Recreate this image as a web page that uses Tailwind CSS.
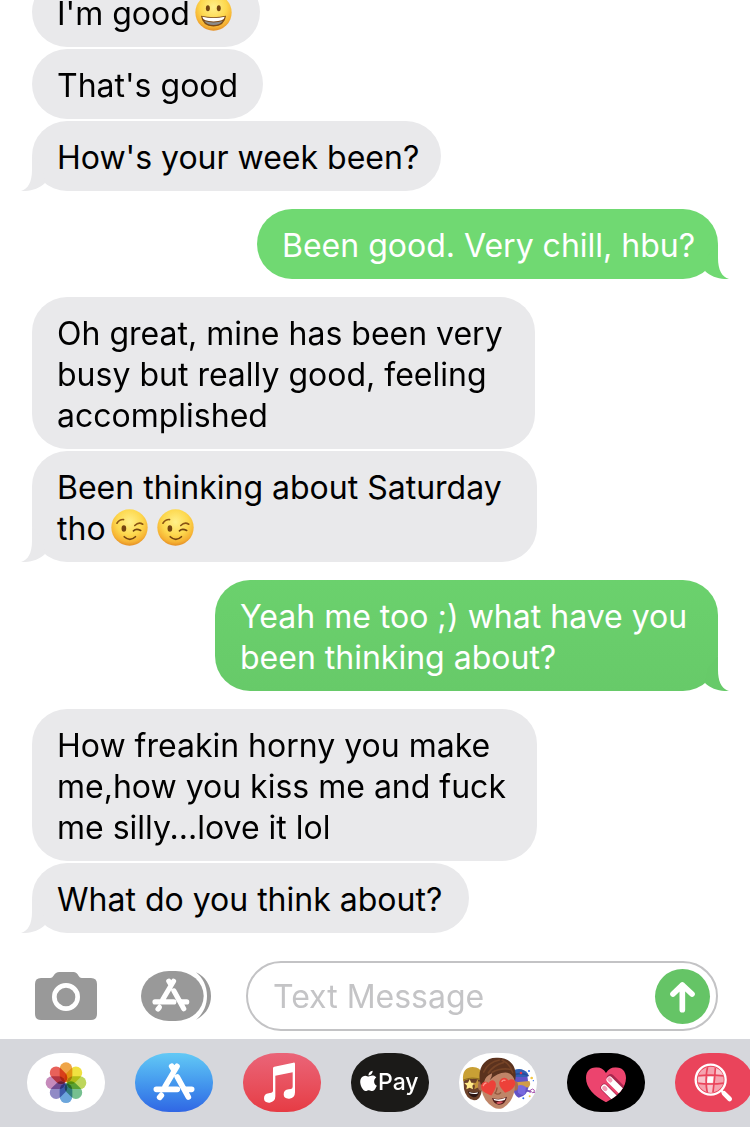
<!DOCTYPE html>
<html lang="en">
<head>
<meta charset="utf-8">
<meta name="viewport" content="width=device-width, initial-scale=1">
<title>Messages</title>
<script src="https://cdn.jsdelivr.net/npm/@tailwindcss/browser@4"></script>
</head>
<body class="bg-white font-[Inter,'Liberation_Sans',sans-serif]">
<svg class="absolute size-0" aria-hidden="true">
  <defs>
    <radialGradient id="face" cx="50%" cy="35%" r="65%">
      <stop offset="0" stop-color="#fff08a"/><stop offset=".55" stop-color="#fdd84e"/><stop offset=".85" stop-color="#f6b334"/><stop offset="1" stop-color="#e58f25"/>
    </radialGradient>
  </defs>
  <symbol id="tail" viewBox="0 0 24 35"><path d="M11 0V14C11 26 7 33 0 35C9 35.5 18 33 24 27L21 12Z" fill="currentColor"/></symbol>
  <symbol id="wink" viewBox="0 0 112 112">
    <circle cx="56" cy="56" r="55" fill="url(#face)"/>
    <path d="M18 43Q26 31 38 32M72 50Q84 38 96 46" fill="none" stroke="#8a5414" stroke-width="5" stroke-linecap="round"/>
    <ellipse cx="39" cy="59" rx="7" ry="10" fill="#744510"/>
    <path d="M68 66Q76 58 90 65" fill="none" stroke="#744510" stroke-width="5" stroke-linecap="round"/>
    <path d="M40 84Q57 100 74 84" fill="none" stroke="#744510" stroke-width="5" stroke-linecap="round"/>
  </symbol>
  <symbol id="grin" viewBox="0 0 112 112">
    <circle cx="56" cy="56" r="55" fill="url(#face)"/>
    <ellipse cx="39" cy="43" rx="6" ry="9" fill="#744510"/><ellipse cx="72" cy="43" rx="6" ry="9" fill="#744510"/>
    <path d="M18 66Q56 75 94 66Q90 98 56 98Q22 98 18 66Z" fill="#7d4a16"/>
    <path d="M22 69Q56 77 90 69Q88 83 56 83Q24 83 22 69Z" fill="#fff"/>
    <path d="M28 82Q56 90 84 82Q76 94 56 94Q36 94 28 82Z" fill="#8b8b8b"/>
  </symbol>
  <symbol id="astore" viewBox="458 336 130 120">
    <path d="M531 350L495 411M515 350L520 358M532 382L565 442M469 419H532M558 419H575M484 437L479 443" fill="none" stroke="#fff" stroke-width="17" stroke-linecap="round"/>
  </symbol>
</svg>

<div class="flex min-h-screen flex-col overflow-hidden">
  <main class="flex flex-col items-start gap-[2px] px-8 text-[32px] leading-[41px] whitespace-nowrap text-black">
    <p class="-mt-[23px] w-[228px] rounded-[35px] bg-[#e9e9eb] px-[25px] pt-4 pb-[13px]">I'm good<svg role="img" aria-label="grinning face" class="ml-[5px] inline size-[37px] align-[-6px]"><use href="#grin"/></svg></p>
    <p class="w-[231px] rounded-[35px] bg-[#e9e9eb] px-[25px] pt-4 pb-[13px]">That's good</p>
    <p class="relative w-[409px] rounded-[35px] bg-[#e9e9eb] px-[25px] pt-4 pb-[13px]">How's your week been?<svg aria-hidden="true" class="absolute bottom-0 -left-[11px] h-[35px] w-6 text-[#e9e9eb]"><use href="#tail"/></svg></p>

    <p class="relative my-4 w-[461px] self-end rounded-[35px] bg-[#70d972] px-[25px] pt-4 pb-[13px] text-white">Been good. Very chill, hbu?<svg aria-hidden="true" class="absolute -right-[11px] bottom-0 h-[35px] w-6 -scale-x-100 text-[#70d972]"><use href="#tail"/></svg></p>

    <p class="w-[503px] rounded-[35px] bg-[#e9e9eb] px-[25px] pt-4 pb-[13px]">Oh great, mine has been very<br>busy but really good, feeling<br>accomplished</p>
    <p class="relative w-[505px] rounded-[35px] bg-[#e9e9eb] px-[25px] pt-4 pb-[13px]">Been thinking about Saturday<br>tho<svg role="img" aria-label="winking face" class="ml-[5px] inline size-[37px] align-[-6px]"><use href="#wink"/></svg><svg role="img" aria-label="winking face" class="ml-[9px] inline size-[37px] align-[-6px]"><use href="#wink"/></svg><svg aria-hidden="true" class="absolute bottom-0 -left-[11px] h-[35px] w-6 text-[#e9e9eb]"><use href="#tail"/></svg></p>

    <p class="relative my-4 w-[503px] self-end rounded-[35px] bg-linear-to-b from-[#6bd16d] to-[#67ca69] px-[25px] pt-4 pb-[13px] text-white">Yeah me too ;) what have you<br>been thinking about?<svg aria-hidden="true" class="absolute -right-[11px] bottom-0 h-[35px] w-6 -scale-x-100 text-[#67ca69]"><use href="#tail"/></svg></p>

    <p class="w-[505px] rounded-[35px] bg-[#e9e9eb] px-[25px] pt-4 pb-[13px]">How freakin horny you make<br>me,how you kiss me and fuck<br>me silly...love it lol</p>
    <p class="relative w-[437px] rounded-[35px] bg-[#e9e9eb] px-[25px] pt-4 pb-[13px]">What do you think about?<svg aria-hidden="true" class="absolute bottom-0 -left-[11px] h-[35px] w-6 text-[#e9e9eb]"><use href="#tail"/></svg></p>
  </main>

  <form class="mt-7 mb-2 flex items-center pr-8 pl-[35px]">
    <button type="button" aria-label="Camera" class="shrink-0">
      <svg class="h-12 w-[62px]" viewBox="105 66 186 144"><path d="M123 84H151Q157 84 160 78Q167 66 178 66H220Q230 66 236 78Q239 84 245 84H273Q291 84 291 102V192Q291 210 273 210H123Q105 210 105 192V102Q105 84 123 84Z" fill="#999"/><circle cx="198" cy="141" r="35" fill="none" stroke="#fff" stroke-width="14"/></svg>
    </button>
    <button type="button" aria-label="Apps" class="ml-11 shrink-0">
      <svg class="h-[50px] w-[70px]" viewBox="423 63 210 150"><rect x="423" y="63" width="188" height="150" rx="84" ry="75" fill="#999"/><path d="M588 67C616 80 633 106 633 138S616 195 588 209C608 193 621 168 621 138S608 83 588 67Z" fill="#999"/><use href="#astore" x="454" y="81" width="119" height="108"/></svg>
    </button>
    <div class="ml-[35px] flex h-[70px] min-w-0 flex-1 items-center rounded-full border-2 border-[#c3c3c5] pr-[6px] pl-[25px]">
      <input type="text" aria-label="Text Message" placeholder="Text Message" class="min-w-0 flex-1 bg-transparent text-[32px] leading-[41px] outline-none placeholder:text-[#c4c4c6]">
      <button type="submit" aria-label="Send" class="size-[55px] shrink-0 rounded-full bg-[#65c466]">
        <svg class="size-[55px]" viewBox="315 54 165 165" fill="none" stroke="#fff" stroke-width="17" stroke-linecap="round" stroke-linejoin="round"><path d="M397 176V102M369 129L397 102L426 129"/></svg>
      </button>
    </div>
  </form>

  <nav aria-label="Apps" class="flex flex-1 items-start gap-[30px] overflow-hidden bg-[#d6d7dc] pt-[14px] pb-[15px] pl-[27px]">
    <button aria-label="Photos" class="h-[59px] w-[78px] shrink-0 overflow-hidden rounded-[34px/29px] bg-white">
      <svg class="h-[59px] w-[78px]" viewBox="81 310 234 177">
        <g transform="translate(198 399)" class="isolate *:mix-blend-multiply">
          <rect x="-19" y="-61" width="38" height="59" rx="19" fill="#efa548"/>
          <rect x="-19" y="-61" width="38" height="59" rx="19" fill="#f0e140" transform="rotate(45)"/>
          <rect x="-19" y="-61" width="38" height="59" rx="19" fill="#bdd65c" transform="rotate(90)"/>
          <rect x="-19" y="-61" width="38" height="59" rx="19" fill="#76c090" transform="rotate(135)"/>
          <rect x="-19" y="-61" width="38" height="59" rx="19" fill="#6ca6dc" transform="rotate(180)"/>
          <rect x="-19" y="-61" width="38" height="59" rx="19" fill="#918bc6" transform="rotate(225)"/>
          <rect x="-19" y="-61" width="38" height="59" rx="19" fill="#c68abb" transform="rotate(270)"/>
          <rect x="-19" y="-61" width="38" height="59" rx="19" fill="#e8615a" transform="rotate(315)"/>
        </g>
      </svg>
    </button>
    <button aria-label="App Store" class="h-[59px] w-[78px] shrink-0 overflow-hidden rounded-[34px/29px] bg-linear-to-b from-[#63c9f5] to-[#3166e4]">
      <svg class="h-[59px] w-[78px]" viewBox="405 310 234 177"><use href="#astore" x="458" y="336" width="130" height="120"/></svg>
    </button>
    <button aria-label="Music" class="h-[59px] w-[78px] shrink-0 overflow-hidden rounded-[34px/29px] bg-linear-to-b from-[#ea6478] to-[#e63b44]">
      <svg class="h-[59px] w-[78px]" viewBox="39 310 234 177" fill="#fff"><path d="M129 356Q129 352 133 351L190 339Q195 338 195 343V428Q195 445 178 447Q161 448 161 434Q161 421 176 419L183 418Q188 417 188 411V368L136 378V440Q136 456 119 459Q102 460 102 446Q102 433 116 431L124 429Q129 428 129 423Z"/></svg>
    </button>
    <button aria-label="Apple Pay" class="h-[59px] w-[78px] shrink-0 overflow-hidden rounded-[34px/29px] bg-[#1b1a18]">
      <svg class="h-[59px] w-[78px]" viewBox="363 310 234 177" fill="#fff"><path transform="translate(385 363) scale(2.55)" d="M12.152 6.896c-.948 0-2.415-1.078-3.96-1.04-2.04.027-3.91 1.183-4.961 3.014-2.117 3.675-.546 9.103 1.519 12.09 1.013 1.454 2.208 3.09 3.792 3.039 1.52-.065 2.09-.987 3.935-.987 1.831 0 2.35.987 3.96.948 1.637-.026 2.676-1.48 3.676-2.948 1.156-1.688 1.636-3.325 1.662-3.415-.039-.013-3.182-1.221-3.22-4.857-.026-3.04 2.48-4.494 2.597-4.559-1.429-2.09-3.623-2.324-4.39-2.376-2-.156-3.675 1.09-4.61 1.09zM15.53 3.83c.843-1.012 1.4-2.427 1.245-3.83-1.207.052-2.662.805-3.532 1.818-.78.896-1.454 2.338-1.273 3.714 1.338.104 2.715-.688 3.559-1.701"/><text x="444" y="422" font-size="69" font-weight="500">Pay</text></svg>
    </button>
    <button aria-label="Memoji" class="h-[59px] w-[78px] shrink-0 overflow-hidden rounded-[34px/29px] bg-white">
      <svg class="h-[59px] w-[78px]" viewBox="57 40 234 177">
        <path d="M70 118Q70 92 98 92Q126 92 126 120V150Q122 182 102 182Q78 178 72 148Z" fill="#6b4029"/>
        <path d="M69 120Q66 84 98 82Q122 82 126 104V122Q96 112 69 124Z" fill="#c9a035"/>
        <path d="M70 121Q96 110 126 120" fill="none" stroke="#8c6c1f" stroke-width="3"/>
        <path d="M89 119L94 129L105 130L97 138L99 149L89 144L79 149L81 138L73 130L84 129Z" fill="#ffe98a"/><path d="M112 119L117 129L126 130V146L112 144L103 149L105 138L99 130L108 129Z" fill="#c4943a"/>
        <path d="M84 155Q100 163 117 156Q115 172 101 173Q87 170 84 155Z" fill="#2b1512"/><path d="M87 157Q101 163 114 158L112 162Q101 165 89 161Z" fill="#fff"/>
        <path d="M224 108H262L266 140Q262 170 236 174Q224 168 220 150Z" fill="#6253c7"/>
        <path d="M222 91Q248 82 264 102L262 112L222 112Z" fill="#2f61b4"/><path d="M224 105Q246 98 266 108" stroke="#264c9c" stroke-width="5" fill="none"/><circle cx="243" cy="100" r="4" fill="#e3374d"/>
        <path d="M228 128L268 124Q274 134 266 143L230 146Z" fill="#d09c48"/><path d="M232 139Q244 132 258 142L255 164Q242 170 234 158Z" fill="#7869df"/>
        <path d="M258 153L272 155" stroke="#6951bd" stroke-width="5"/><path d="M270 160Q268 149 278 148Q286 150 282 158Q276 162 274 155M282 158L287 159" fill="none" stroke="#a754ae" stroke-width="3"/>
        <g fill="#2f6be8"><circle cx="267" cy="94" r="3"/><circle cx="250" cy="176" r="3"/><circle cx="280" cy="123" r="2"/></g><g fill="#f3c53f"><circle cx="275" cy="115" r="4"/><circle cx="269" cy="170" r="3"/></g>
        <ellipse cx="122" cy="139" rx="8" ry="14" fill="#a86d4f"/><ellipse cx="227" cy="139" rx="7" ry="14" fill="#a86d4f"/>
        <path d="M124 102Q174 70 224 102V151Q216 190 189 205Q174 211 160 203Q130 184 125 151Z" fill="#bf8568"/>
        <path d="M120 126C112 84 134 53 170 54C212 52 234 82 225 125C220 110 214 102 202 99Q174 96 149 122Q157 110 156 101Q135 110 132 128L123 137Z" fill="#5b321e"/>
        <path d="M131 97Q145 67 178 61M145 100Q160 77 190 69M157 98Q181 84 211 89M187 62Q212 74 218 99" fill="none" stroke="#754326" stroke-width="5" stroke-linecap="round"/>
        <path d="M171 145Q169 158 165 160Q174 167 182 159" fill="none" stroke="#93583f" stroke-width="4" stroke-linecap="round"/>
        <path d="M156 175Q179 183 201 171Q196 196 176 195Q161 193 156 175Z" fill="#501b1a"/><path d="M160 177Q179 183 197 174L194 181Q178 187 163 182Z" fill="#fff"/><path d="M168 190Q178 181 190 187Q178 198 168 190Z" fill="#da5963"/>
        <path d="M148 168C133 158 121 149 124 136C127 123 141 119 149 130C158 119 171 125 169 139C167 151 157 160 148 168Z" transform="rotate(-14 148 142)" fill="#ed4139"/>
        <path d="M200 160C184 149 174 141 177 128C180 116 194 111 202 122C211 111 226 117 224 132C222 144 211 154 200 160Z" transform="rotate(12 201 137)" fill="#ed4139"/>
        <path d="M130 138Q132 131 138 130M186 125Q189 120 195 122" stroke="#ff9187" stroke-width="4" fill="none" stroke-linecap="round"/>
      </svg>
    </button>
    <button aria-label="Digital Touch" class="h-[59px] w-[78px] shrink-0 overflow-hidden rounded-[34px/29px] bg-black">
      <svg class="h-[59px] w-[78px]" viewBox="51 310 234 177">
        <clipPath id="heart"><path d="M168 458C132 439 108 414 108 385C108 364 121 353 139 353Q158 353 168 370Q178 353 197 353C215 353 228 365 228 385C228 414 204 439 168 458Z"/></clipPath>
        <g clip-path="url(#heart)"><path d="M108 350H228V460H108Z" fill="#ec446e"/><path d="M182 385L240 443M163 414L218 469" stroke="#a9284f" stroke-width="23" stroke-linecap="round"/><path d="M179 390L237 448M163 414L218 469" stroke="#fff" stroke-width="19" stroke-linecap="round"/><path d="M178 389L181 392M163 415L166 418" stroke="#f4a0b8" stroke-width="13" stroke-linecap="round"/></g>
      </svg>
    </button>
    <button aria-label="Image search" class="h-[59px] w-[78px] shrink-0 overflow-hidden rounded-[34px/29px] bg-[#ea445b]">
      <svg class="h-[59px] w-[78px]" viewBox="375 310 234 177">
        <clipPath id="lens"><circle cx="482" cy="390" r="39"/></clipPath>
        <g clip-path="url(#lens)"><path d="M440 350H525V430H440Z" fill="#f5a3af"/><path d="M472 380H491V400H472ZM495 350H520V378H495ZM445 380H468V400H445ZM472 404H491V430H472Z" fill="#f8c4cc"/><path d="M474 381H491L488 399H471Z" fill="#fff"/><path d="M474 345Q463 390 473 435M497 345Q494 390 488 435M440 379Q482 374 525 379M440 400Q482 406 525 400" fill="none" stroke="#ea445b" stroke-width="5"/></g>
        <circle cx="482" cy="390" r="45" fill="none" stroke="#fff" stroke-width="7"/><path d="M513 422L520 429" stroke="#fff" stroke-width="8"/><path d="M522 431L539 448" stroke="#fff" stroke-width="14" stroke-linecap="round"/>
      </svg>
    </button>
  </nav>
</div>
</body>
</html>
